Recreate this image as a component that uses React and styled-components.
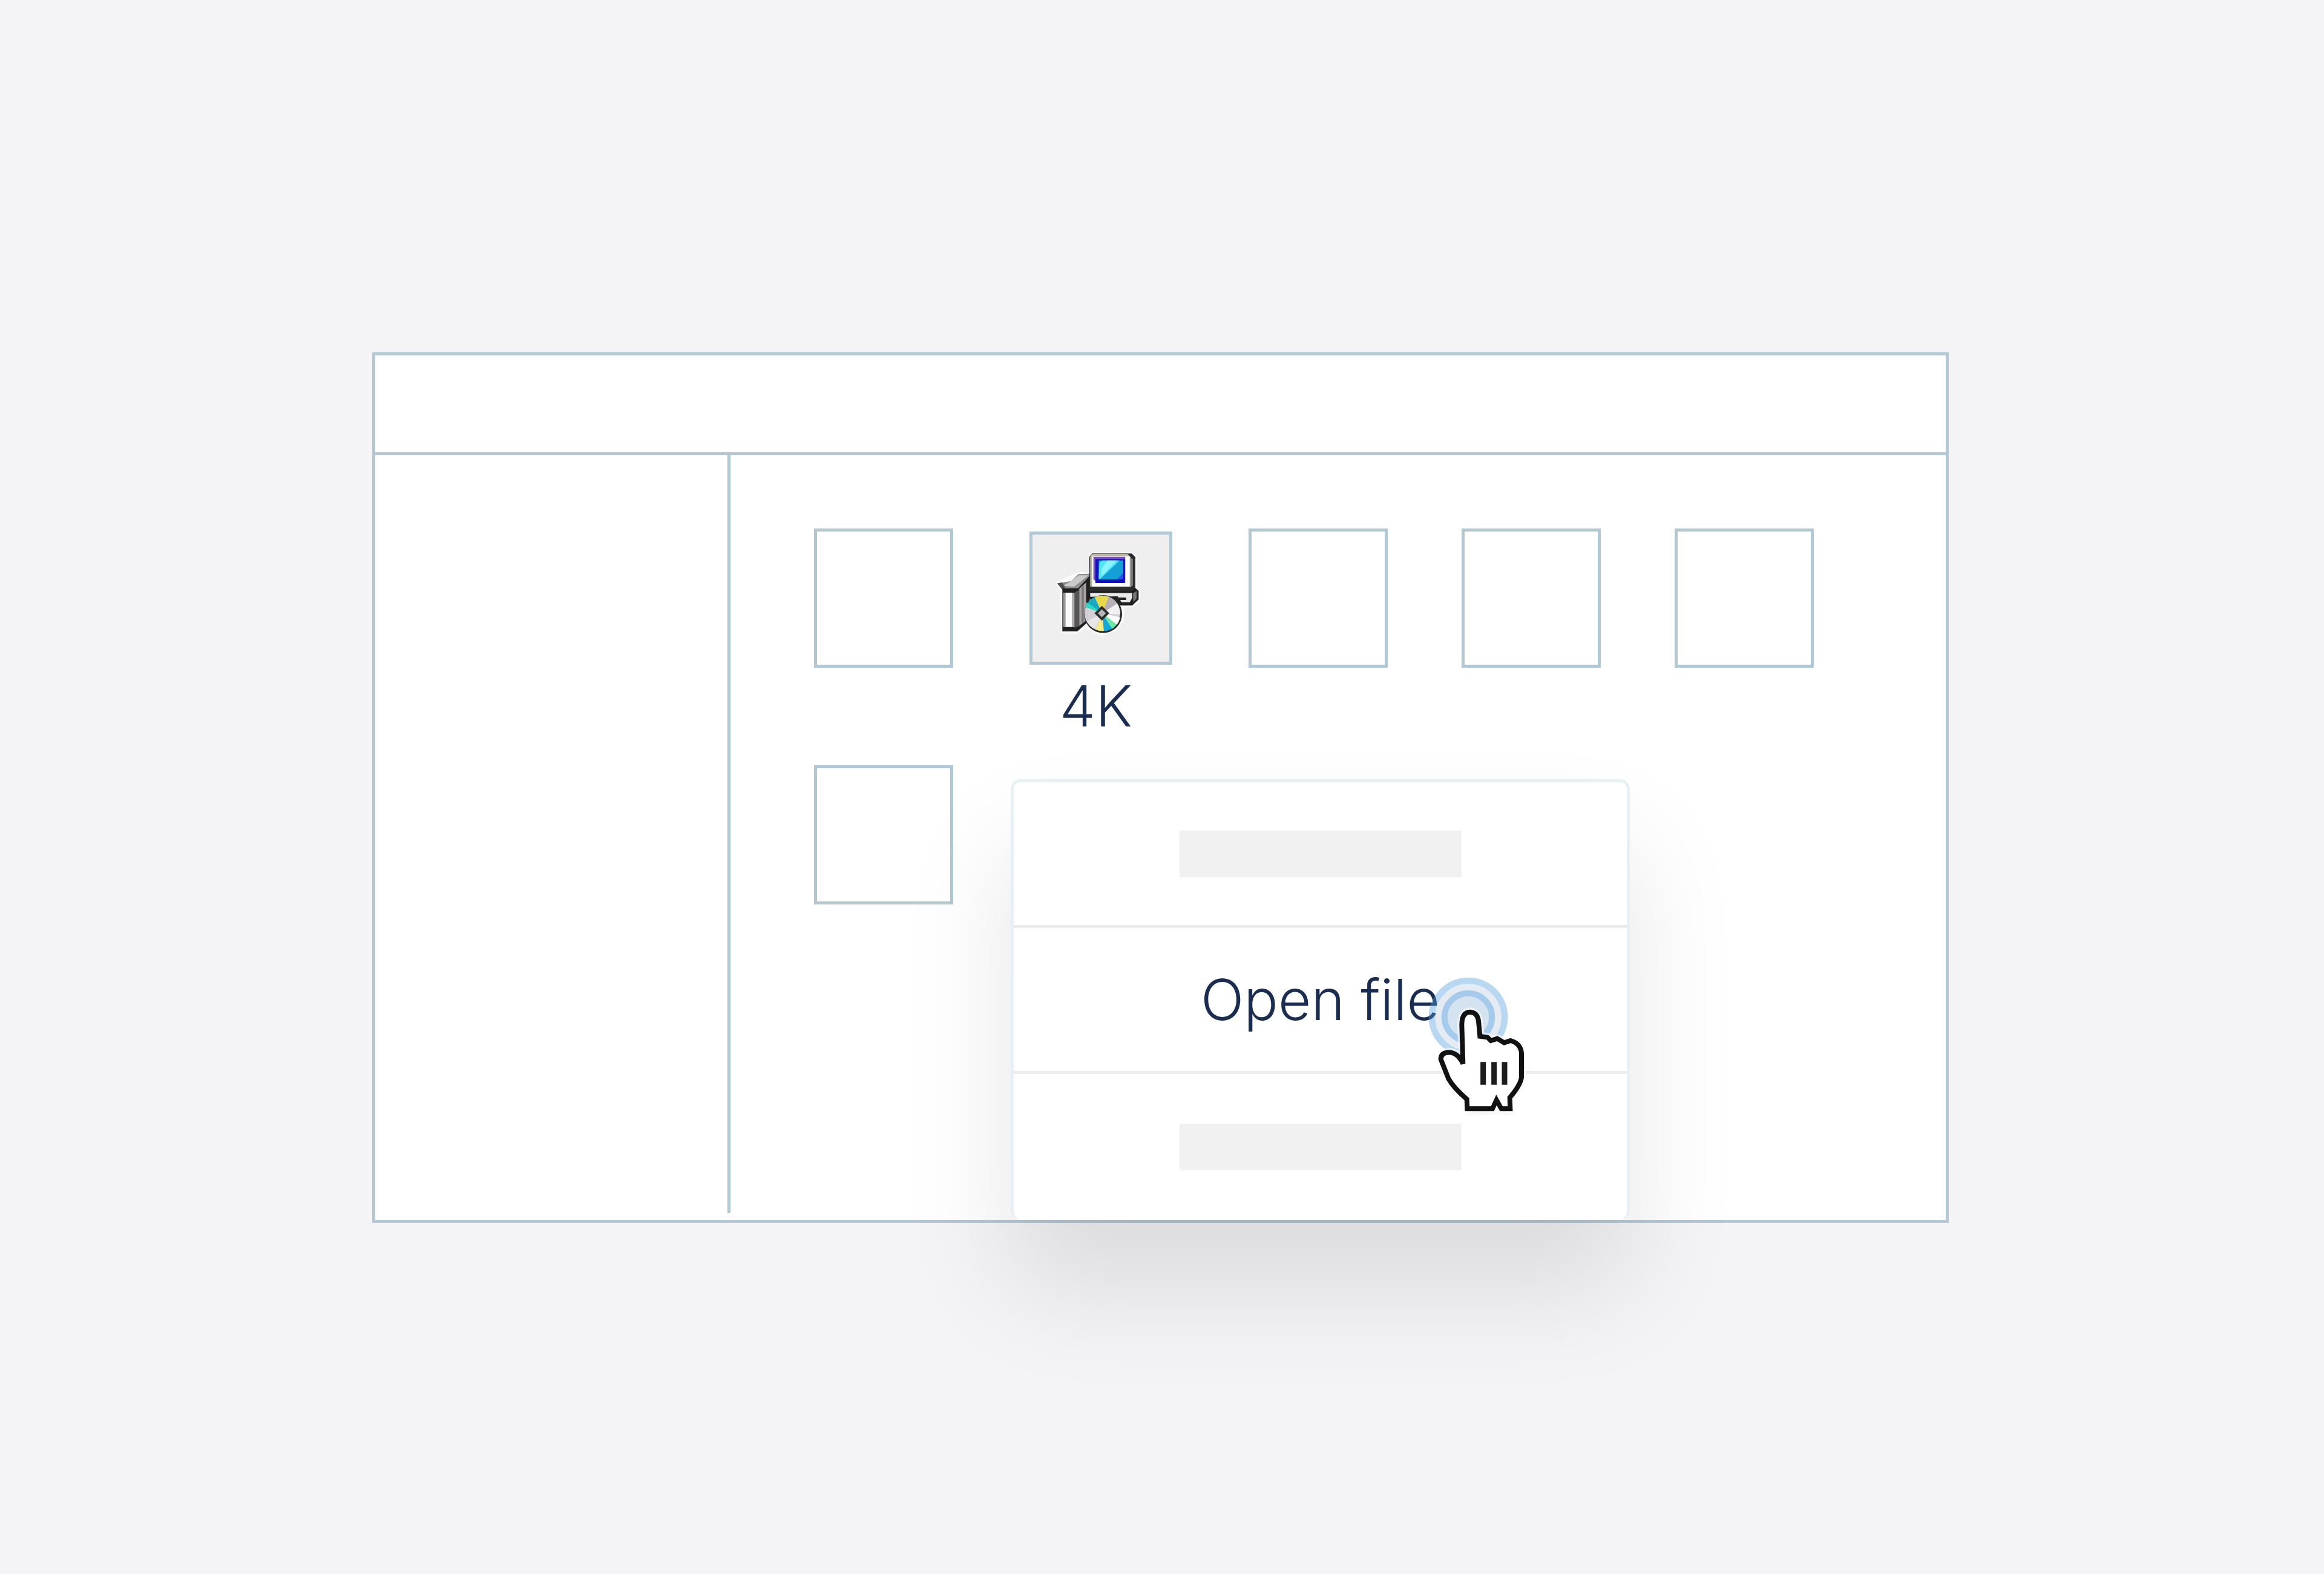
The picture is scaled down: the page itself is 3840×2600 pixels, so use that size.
import React from "react";
import styled, { createGlobalStyle } from "styled-components";

const files = [
  [{ id: 1 }, { id: 2, name: "4K" }, { id: 3 }, { id: 4 }, { id: 5 }],
  [{ id: 6 }],
];

const menuItems = [{ id: "first" }, { id: "open", text: "Open file" }, { id: "last" }];

export default function App() {
  return (
    <>
      <GlobalStyle />
      <Page>
        <Window>
          <Header />
          <Body>
            <Sidebar />
            <Main>
              {files.map((row) => (
                <FileRow key={row[0].id}>
                  {row.map((file) =>
                    file.name ? (
                      <SelectedFile key={file.id}>
                        <SelectedTile aria-labelledby="file-name">
                          <InstallerIcon />
                        </SelectedTile>
                        <FileName id="file-name">{file.name}</FileName>
                      </SelectedFile>
                    ) : (
                      <Tile key={file.id} aria-label="File" />
                    )
                  )}
                </FileRow>
              ))}
              <Menu>
                {menuItems.map((item) => (
                  <MenuItem key={item.id} aria-label={item.text || "Menu item"}>
                    {item.text || <Bar />}
                    {item.text && <HandPointer />}
                  </MenuItem>
                ))}
              </Menu>
            </Main>
          </Body>
        </Window>
      </Page>
    </>
  );
}

const HandPointer = () => (
  <Pointer viewBox="0 0 660 840" aria-hidden="true">
    <defs>
      <filter id="soft" x="-20%" y="-20%" width="140%" height="140%">
        <feGaussianBlur stdDeviation="14" />
      </filter>
      <path
        id="hand"
        d="M262 522 L256 330 Q256 268 296 266 Q338 268 340 322 L346 386 L384 392 L400 408 L432 398 L466 418 L498 408 Q548 422 552 470 L552 590 Q546 630 494 690 L496 745 L452 745 L428 702 L408 745 L283 745 L281 698 Q216 642 190 596 L152 500 Q152 466 196 466 Q238 470 262 522 Z"
      />
    </defs>
    <circle cx="288" cy="291" r="164" fill="#a8bcd7" fillOpacity="0.3" />
    <circle cx="288" cy="291" r="180" fill="none" stroke="#4d9ddc" strokeWidth="32" strokeOpacity="0.4" />
    <circle cx="288" cy="291" r="118" fill="#d5e3f1" stroke="#a6caeb" strokeWidth="30" />
    <use href="#hand" y="14" fill="#000" opacity="0.2" filter="url(#soft)" />
    <use href="#hand" fill="#fff" stroke="#fff" strokeWidth="44" strokeOpacity="0.6" />
    <use href="#hand" fill="#fff" stroke="#111" strokeWidth="24" />
    <path d="M362 514V626M416 514V626M468 514V626" stroke="#1c1c1c" strokeWidth="27" />
  </Pointer>
);

const InstallerIcon = () => (
  <Installer viewBox="0 0 540 540" aria-hidden="true">
    {/* light edge */}
    <path
      d="M72 206L150 172L190 156L238 160L238 74L256 58L450 58L474 78L476 240L492 250L490 300L456 330L412 332L410 400L370 448L300 470L220 436L180 462L100 460L96 250Z"
      fill="#fff"
      opacity="0.8"
    />
    {/* box */}
    <path d="M80 212L150 200L186 166L244 164L246 236L214 236L182 250L110 250Z" fill="#8d8d8d" />
    <path d="M150 200L188 172L236 172L196 204L164 228L110 224Z" fill="#c9c9c9" />
    <path d="M80 212L104 208L120 232L108 242Z" fill="#4d4d4d" />
    <path d="M106 236H184L248 168V218L232 404L180 450H106Z" fill="#202020" />
    <path d="M114 258H166V428H114Z" fill="#fafafa" />
    <path d="M110 258H122V428H110Z" fill="#9a9a9a" />
    <path d="M154 258H168V428H154Z" fill="#a8a8a8" />
    <path d="M166 258L190 242V424L166 432Z" fill="#555" />
    <path d="M190 238L224 208V396L190 422Z" fill="#aaa2a4" />
    <path d="M202 230L212 222V400L202 410Z" fill="#777" />
    {/* base of the computer */}
    <path d="M234 236H470L484 250V292L452 322H392L234 290Z" fill="#202020" />
    <path d="M244 260H452V284L440 306H400L380 276L244 278Z" fill="#e8e8e8" />
    <path d="M350 282H422V294H350Z" fill="#222" />
    <path d="M456 262L474 250V288L458 304Z" fill="#777" />
    {/* monitor */}
    <path d="M254 64H450L468 82V236L448 250H240V80Z" fill="#2b2b2b" />
    <path d="M254 66H430L444 82V228H244V80Z" fill="#b9b7a4" />
    <path d="M254 78H440V228H254Z" fill="#fff" />
    <path d="M444 84L456 92V222L444 232Z" fill="#777" />
    <path d="M260 80H418V208H276L260 190Z" fill="#7a4fc4" />
    <path d="M270 92H416V210H270Z" fill="#1212b4" />
    <path d="M286 98H408V192H286Z" fill="#12a0d6" />
    <path d="M290 108L304 98H390L294 190H286Z" fill="#52e4fb" />
    <path d="M330 98H376L300 176V140Z" fill="#8cf3fd" />
    <path d="M408 160V192H378Z" fill="#2b52ee" />
    {/* disc */}
    <circle cx="308" cy="364" r="94" fill="#2a2a2a" />
    <circle cx="304" cy="360" r="88" fill="#d3d0d5" />
    <path d="M304 360L226 318Q238 294 266 280Z" fill="#18a8c0" />
    <path d="M304 360L222 330L226 306L262 330Z" fill="#2bd9c4" />
    <path d="M304 360L268 280Q300 268 336 278Z" fill="#e8d94a" />
    <path d="M304 360L336 278Q366 290 378 312Z" fill="#b5afb8" />
    <path d="M304 360L378 312Q394 336 392 366Z" fill="#f2f0f2" />
    <path d="M304 360L392 380Q388 402 376 416Z" fill="#fff" />
    <path d="M304 360L376 416Q366 428 352 438Z" fill="#6fe6a6" />
    <path d="M304 360L352 436Q336 448 312 448Z" fill="#12a9d8" />
    <path d="M304 360L310 448Q290 448 270 440Z" fill="#f3ea86" />
    <path d="M304 360L266 438Q242 424 228 400Z" fill="#e9e6ea" />
    <rect x="276" y="334" width="52" height="52" fill="#2e2e2e" transform="rotate(45 302 360)" />
    <rect x="288" y="346" width="28" height="28" fill="#b9b6ba" transform="rotate(45 302 360)" />
  </Installer>
);

const GlobalStyle = createGlobalStyle`
  body {
    margin: 0;
    background: #f4f4f7;
    font-family: Inter, Lato, sans-serif;
  }
  button {
    padding: 0;
    font: inherit;
    color: inherit;
    cursor: pointer;
  }
`;

const Page = styled.div`
  box-sizing: border-box;
  min-height: 100vh;
  padding: 2px 620px 0 615px;
  display: flex;
  flex-direction: column;
  justify-content: center;
  color: #1a2c50;
  font-size: 94px;
  font-weight: 300;
  line-height: 116px;
`;

const Window = styled.div`
  border: 5px solid #b3c8d5;
  background: #fff;
`;

const Header = styled.header`
  height: 160px;
  border-bottom: 5px solid #b3c8d5;
`;

const Body = styled.div`
  display: flex;
  min-height: 1263px;
`;

const Sidebar = styled.aside`
  width: 582px;
  margin-bottom: 11px;
  border-right: 5px solid #b3c8d5;
`;

const Main = styled.main`
  position: relative;
  flex: 1;
  padding: 121px 0 0 138px;
  display: flex;
  flex-direction: column;
  gap: 40px;
`;

const FileRow = styled.div`
  display: flex;
  align-items: flex-start;
  gap: 122px;
`;

const Tile = styled.button`
  box-sizing: border-box;
  width: 230px;
  height: 230px;
  border: 5px solid #b3c8d5;
  background: transparent;
`;

const SelectedFile = styled.div`
  width: 244px;
  padding-top: 5px;
  display: flex;
  flex-direction: column;
  align-items: center;
  gap: 10px;
`;

const SelectedTile = styled(Tile)`
  width: 236px;
  height: 220px;
  background: #efefef;
`;

const Installer = styled.svg`
  display: block;
  width: 180px;
  height: 180px;
  margin: 0 auto 10px 14px;
`;

const FileName = styled.span`
  padding-right: 16px;
`;

const Menu = styled.div`
  position: absolute;
  left: 463px;
  bottom: 0;
  box-sizing: border-box;
  width: 1023px;
  border: 5px solid #e9f0f4;
  border-bottom: none;
  border-radius: 16px;
  background: #fff;
  box-shadow: 0 112px 184px rgba(0, 0, 0, 0.1);
`;

const MenuItem = styled.button`
  position: relative;
  display: flex;
  align-items: center;
  justify-content: center;
  width: 100%;
  height: 241px;
  border: none;
  border-bottom: 5px solid #ececec;
  background: transparent;

  &:nth-child(2) {
    z-index: 1;
  }
  &:last-child {
    border-bottom: none;
  }
`;

const Bar = styled.span`
  width: 466px;
  height: 77px;
  background: #f1f1f1;
`;

const Pointer = styled.svg`
  position: absolute;
  left: 655px;
  top: 50px;
  width: 220px;
  height: 280px;
`;
